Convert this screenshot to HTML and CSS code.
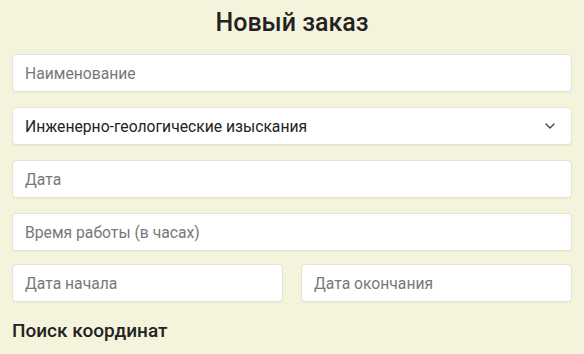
FILE: index.html
```html
<!DOCTYPE html>
<html lang="ru">
<head>
    <meta charset="UTF-8">
    <meta name="viewport" content="width=device-width, initial-scale=1.0">
    <title>Новый заказ</title>
    <link rel="stylesheet" href="styles.css">
</head>
<body>

    <!-- Order form -->
    <div class="container">
        <h1 class="title">Новый заказ</h1>

        <div class="form-group">
            <input type="text" class="form-control" placeholder="Наименование">
        </div>

        <div class="form-group select-wrap">
            <select class="form-control">
                <option>Инженерно-геологические изыскания</option>
                <option>Инженерно-геодезические изыскания</option>
                <option>Инженерно-экологические изыскания</option>
            </select>
            <svg class="chevron" width="10" height="6" viewBox="0 0 10 6">
                <path d="M1 1 L5 5 L9 1" fill="none" stroke="#444" stroke-width="1.4" stroke-linecap="round" stroke-linejoin="round"/>
            </svg>
        </div>

        <div class="form-group">
            <input type="text" class="form-control" placeholder="Дата">
        </div>

        <div class="form-group">
            <input type="text" class="form-control" placeholder="Время работы (в часах)">
        </div>

        <div class="form-row">
            <input type="text" class="form-control" placeholder="Дата начала">
            <input type="text" class="form-control" placeholder="Дата окончания">
        </div>

        <h2 class="subtitle">Поиск координат</h2>
    </div>

</body>
</html>
```

FILE: styles.css
```css
/* General body styling */
body {
    font-family: Roboto, "Liberation Sans", sans-serif;
    margin: 0;
    padding: 0;
    background-color: #f4f4dc;
    color: #222;
}

.container {
    padding: 0 12px;
}

.title {
    font-size: 25px;
    font-weight: 500;
    text-align: center;
    margin: 0;
    padding-top: 8px;
    height: 46px;
    line-height: 30px;
}

/* Inputs */
.form-group {
    margin-bottom: 15px;
}

.form-control {
    display: block;
    width: 100%;
    box-sizing: border-box;
    height: 38px;
    padding: 0 12px;
    font-family: inherit;
    font-size: 15.7px;
    color: #222;
    background-color: #fff;
    border: 1px solid #e2e2d8;
    border-radius: 4px;
    box-shadow: 0 1px 1px rgba(0, 0, 0, 0.04);
    outline: none;
}

.form-control::placeholder {
    color: #787878;
}

select.form-control {
    appearance: none;
    -webkit-appearance: none;
}

.select-wrap {
    position: relative;
}

.chevron {
    position: absolute;
    right: 17px;
    top: 16px;
    pointer-events: none;
}

.form-row {
    display: grid;
    grid-template-columns: 1fr 1fr;
    gap: 18px;
    margin-top: -2px;
}

.subtitle {
    font-size: 19px;
    font-weight: 500;
    margin: 17px 0 0;
}
```
